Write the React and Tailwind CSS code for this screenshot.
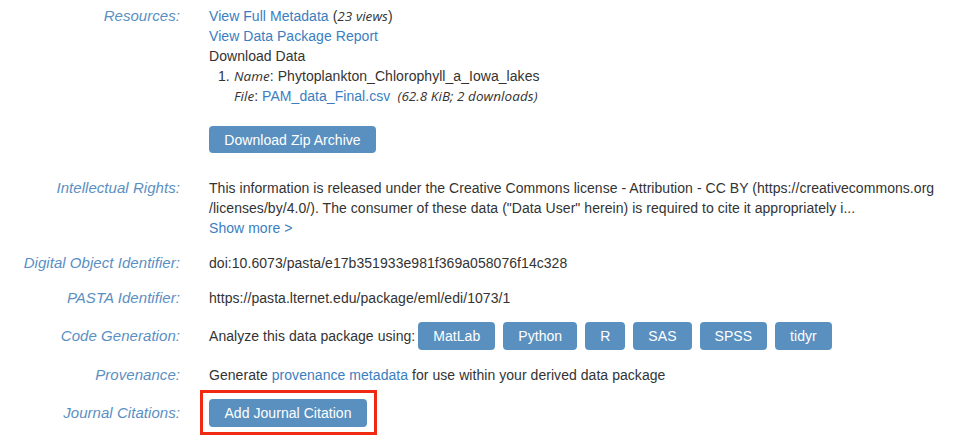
import React from 'react'

const label = 'w-[180px] shrink-0 text-right italic text-[15px] text-[#5a8fc3]'
const em = "italic font-['Open_Sans',sans-serif] text-[13.5px]"

function Row({ name, className = '', children }) {
  return (
    <div className={`flex ${className}`}>
      <div className={label}>{name}</div>
      <div className="pl-[29px] flex-1">{children}</div>
    </div>
  )
}

function Btn({ children, className = '' }) {
  return (
    <button className={`bg-[#5a90c0] text-white rounded-[4px] text-[14px] leading-[20px] ${className}`}>
      {children}
    </button>
  )
}

export default function App() {
  const tools = ['MatLab', 'Python', 'R', 'SAS', 'SPSS', 'tidyr']

  return (
    <div className="min-h-screen bg-white text-[#333] text-[14px] leading-[20px] pt-[6px] font-['Liberation_Sans',Arial,sans-serif] tracking-[0.05px]">
      {/* Resources */}
      <Row name="Resources:">
        <div>
          <a className="text-[#3a7ebf]">View Full Metadata</a> (
          <span className={em}>23 views</span>)
        </div>
        <div><a className="text-[#3a7ebf]">View Data Package Report</a></div>
        <div>Download Data</div>
        <div className="flex pl-[9px]">
          <span className="w-[16px]">1.</span>
          <div>
            <div>
              <span className={em}>Name</span>: Phytoplankton_Chlorophyll_a_Iowa_lakes
            </div>
            <div>
              <span className={em}>File</span>:{' '}
              <a className="text-[#3a7ebf]">PAM_data_Final.csv</a>
              <span className={em}>&nbsp;&nbsp;(62.8 KiB; 2 downloads)</span>
            </div>
          </div>
        </div>
        <Btn className="mt-[20px] w-[167px] h-[27px]">Download Zip Archive</Btn>
      </Row>

      {/* Intellectual Rights */}
      <Row name="Intellectual Rights:" className="mt-[25px]">
        <div className="whitespace-nowrap">This information is released under the Creative Commons license - Attribution - CC BY (https://creativecommons.org</div>
        <div className="whitespace-nowrap">/licenses/by/4.0/). The consumer of these data ("Data User" herein) is required to cite it appropriately i...</div>
        <div><a className="text-[#3a7ebf]">Show more &gt;</a></div>
      </Row>

      <Row name="Digital Object Identifier:" className="mt-[15px]">
        doi:10.6073/pasta/e17b351933e981f369a058076f14c328
      </Row>

      <Row name="PASTA Identifier:" className="mt-[15px]">
        https://pasta.lternet.edu/package/eml/edi/1073/1
      </Row>

      {/* Code Generation */}
      <div className="flex items-center mt-[14px]">
        <div className={label}>Code Generation:</div>
        <div className="pl-[29px] flex items-center">
          <span className="mr-[3px]">Analyze this data package using:</span>
          <div className="flex gap-[8px]">
            {tools.map((t) => (
              <Btn key={t} className="h-[28px] px-[15px]">{t}</Btn>
            ))}
          </div>
        </div>
      </div>

      <Row name="Provenance:" className="mt-[15px]">
        Generate <a className="text-[#3a7ebf]">provenance metadata</a> for use within your derived data package
      </Row>

      {/* Journal Citations */}
      <div className="flex items-center mt-[14px]">
        <div className={label}>Journal Citations:</div>
        <div className="pl-[29px]">
          <div className="relative">
            <Btn className="w-[158px] h-[28px]">Add Journal Citation</Btn>
            <div className="absolute left-[-9px] top-[-9px] w-[177px] h-[45px] border-[3px] border-[#f02a12] pointer-events-none" />
          </div>
        </div>
      </div>
    </div>
  )
}
